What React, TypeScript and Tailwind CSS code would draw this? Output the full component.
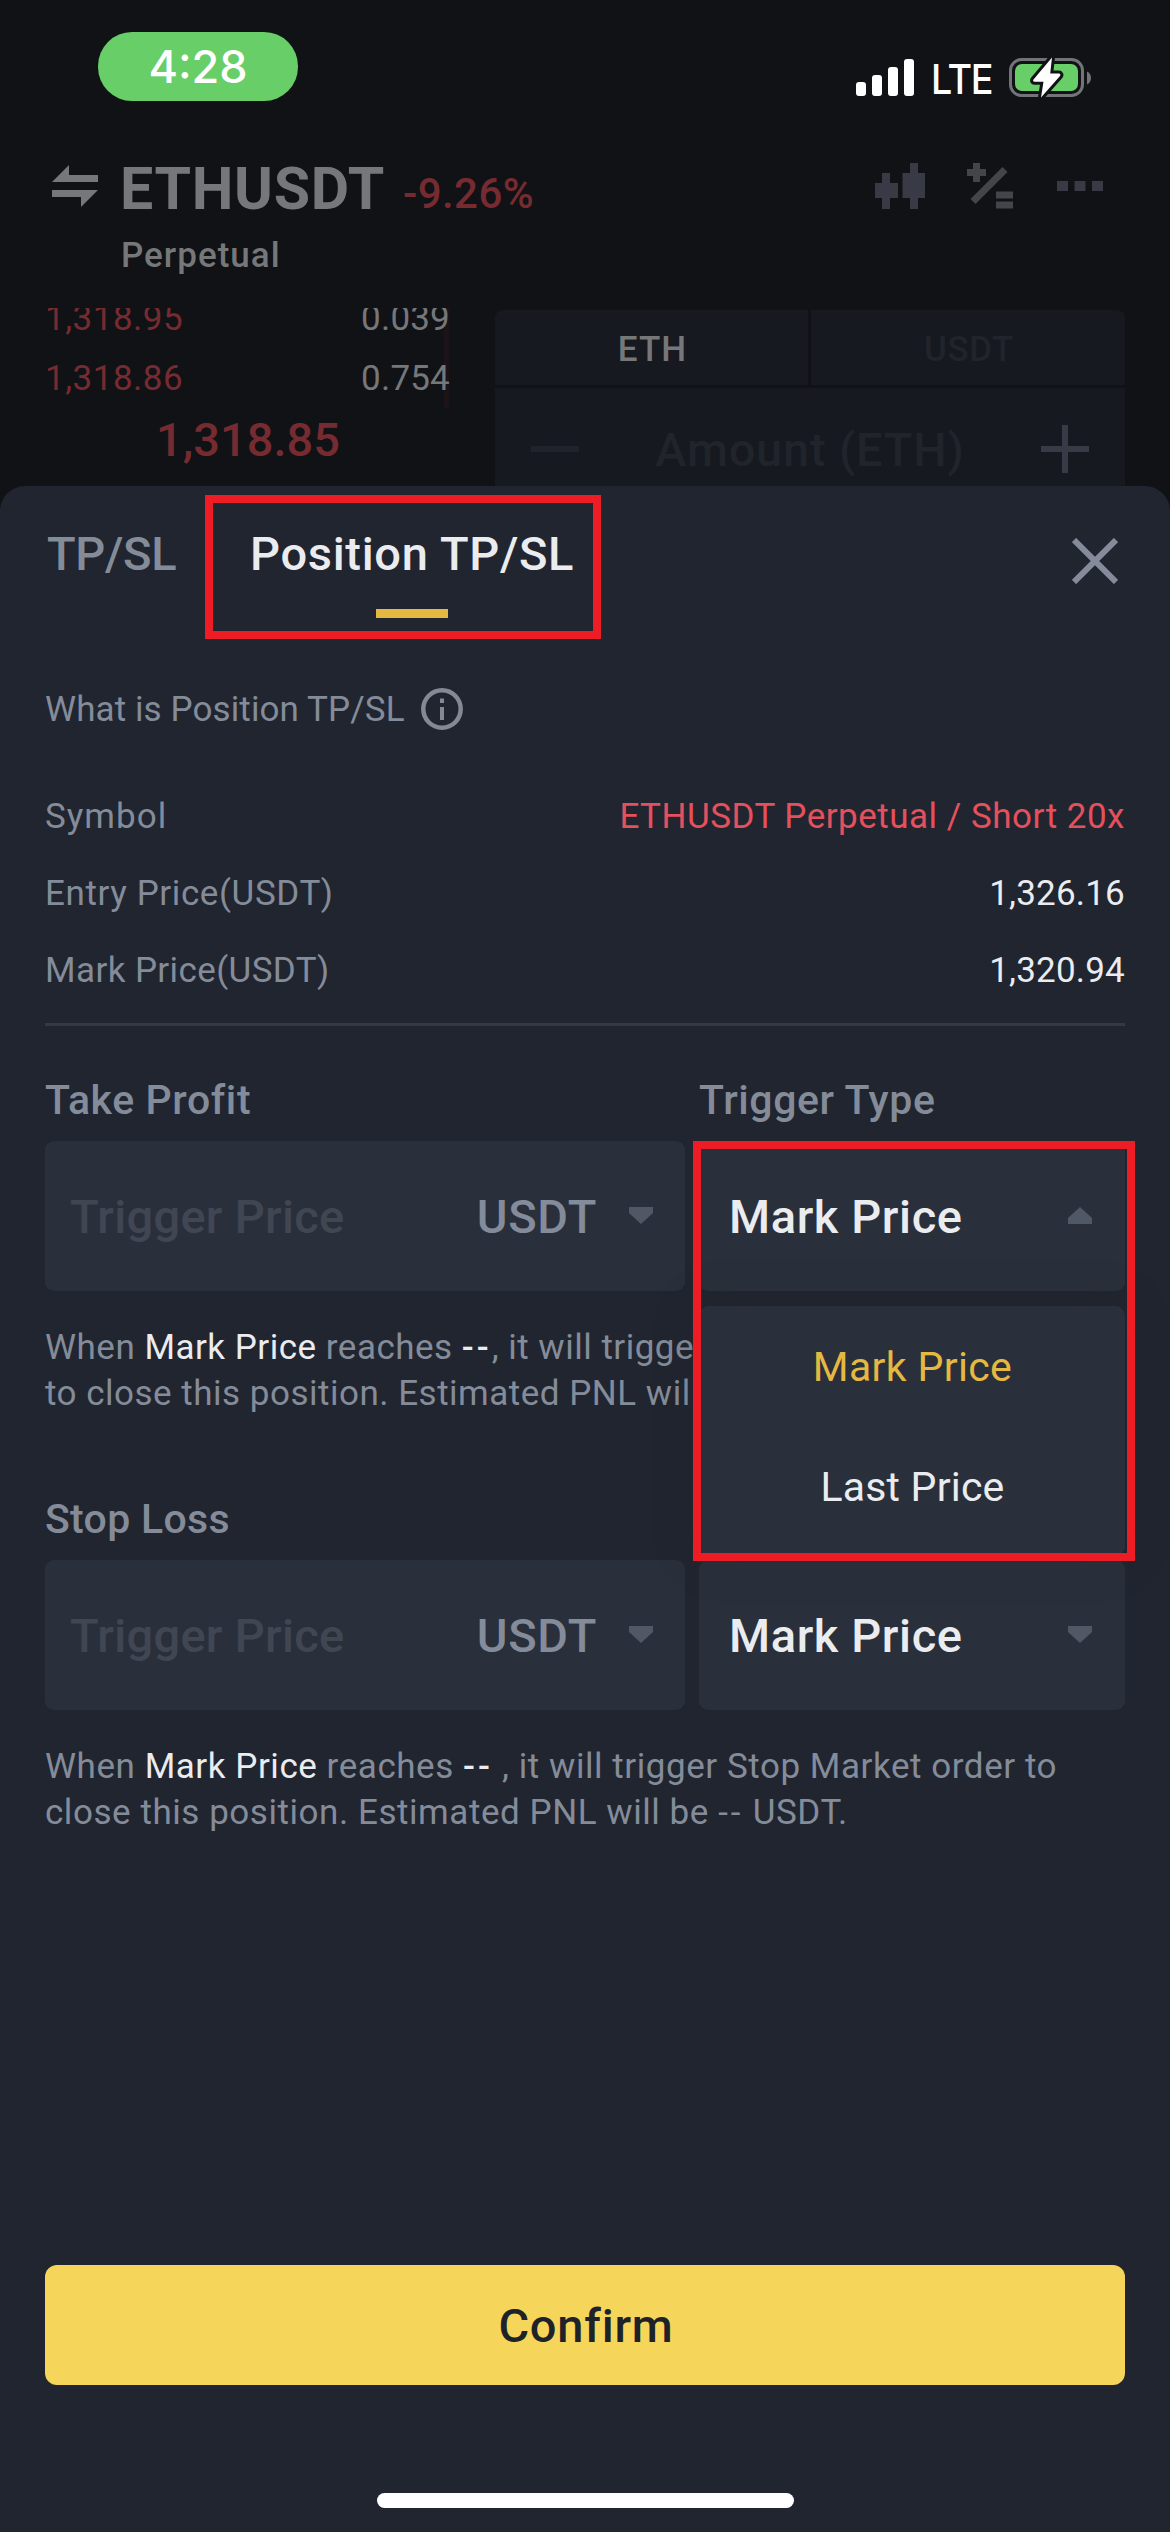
const asks = [
  { price: "1,318.95", amount: "0.039" },
  { price: "1,318.86", amount: "0.754" },
];

function Caret({ up = false }: { up?: boolean }) {
  return (
    <svg width="24" height="17" viewBox="0 0 24 17" fill="#505765" className="mb-[3px]">
      {up ? <path d="M0 17V11L12 0l12 11v6z" /> : <path d="M0 0h24v6L12 17 0 6z" />}
    </svg>
  );
}

function StatusBar() {
  return (
    <div className="flex h-[140px] items-start justify-between pl-[98px] pr-[79px]">
      <div className="mt-8 flex h-[69px] w-[200px] items-center justify-center rounded-[34px] bg-[#68ce67] font-['Inter'] text-[45px] font-medium text-white">
        4:28
      </div>
      <div className="mt-[57px] flex h-[41px] items-center">
        <svg width="58" height="37" viewBox="0 0 58 37" fill="#fff">
          <rect x="0" y="23" width="10" height="14" rx="3" />
          <rect x="16" y="16" width="10" height="21" rx="3" />
          <rect x="32" y="8" width="10" height="29" rx="3" />
          <rect x="48" y="0" width="10" height="37" rx="3" />
        </svg>
        <span className="ml-[17px] w-[78px] origin-left scale-x-[0.92] pt-[3px] font-['Inter'] text-[41px] font-medium leading-none tracking-[-1.5px] text-white">
          LTE
        </span>
        <svg width="82" height="41" viewBox="0 0 82 41">
          <rect x="1.5" y="2.5" width="72" height="36" rx="11" fill="none" stroke="#727477" strokeWidth="3" />
          <path d="M78 14.5c2.4 1 4 3.500 4 6.500s-1.600 5.500-4 6.500z" fill="#727477" />
          <rect x="6" y="7" width="63" height="27" rx="7" fill="#68ce67" />
          <path
            d="M43 .5 24.500 22.500c-.8 1.200-.2 2.300 1 2.300h9L32 40.500 51 19c.9-1.200.2-2.500-1.200-2.500h-8.600z"
            fill="#fff"
            stroke="#101216"
            strokeWidth="6"
            strokeLinejoin="round"
            paintOrder="stroke"
          />
        </svg>
      </div>
    </div>
  );
}

function PairHeader() {
  return (
    <>
      <div className="flex h-[96px] items-center justify-between pl-[52px] pr-[67px]">
        <div className="flex items-center">
          <svg width="46" height="43" viewBox="0 0 46 43" fill="#767779" className="mb-1">
            <path d="M0 17 17 0v10h29v7z" />
            <path d="M0 25h46L29 42V32H0z" />
          </svg>
          <span className="ml-[22px] pt-[1px] text-[59px] font-bold leading-none tracking-[0.7px] text-[#767779]">
            ETHUSDT
          </span>
          <span className="ml-[18px] pt-[12px] text-[42px] font-medium leading-none tracking-[0.4px] text-[#762b31]">
            -9.26%
          </span>
        </div>
        <div className="mb-1 flex items-center">
          <svg width="50" height="46" viewBox="0 0 50 46" fill="#383b45">
            <path d="M7 10h8v10h8v15h-8v11H7V35H0V20h7z" />
            <path d="M35 0h8v10h7v25h-7v11h-8V35h-7.500V10H35z" />
          </svg>
          <svg width="46" height="46" viewBox="0 0 46 46" fill="#43454b" className="ml-[42px]">
            <path d="M6 0h7v6h6v7h-6v6H6v-6H0V6h6z" />
            <path d="m35.500 4 5 5L8.500 41l-5-5z" />
            <path d="M29 28.500h17v7H29zM29 38.500h17v7H29z" />
          </svg>
          <svg width="46" height="10" viewBox="0 0 46 10" fill="#383b45" className="ml-[44px]">
            <path d="M0 0h11v10H0zM17.500 0h11v10h-11zM35 0h11v10H35z" />
          </svg>
        </div>
      </div>
      <div className="flex h-[48px] items-center pb-[7px] pl-[121px] text-[35px] font-medium tracking-[1px] text-[#767779]">
        Perpetual
      </div>
    </>
  );
}

function TradeArea() {
  return (
    <div className="mt-6 flex h-[178px] overflow-hidden pl-[45px]">
      <div className="w-[404px] shrink-0">
        <div className="-mt-[20px] border-r-[5px] border-[#1c1319]">
          {asks.map((a) => (
            <div key={a.price} className="-mr-[6px] flex h-[60px] items-center justify-between pt-[2px] text-[35px]">
              <span className="tracking-[0.5px] text-[#762b31]">{a.price}</span>
              <span className="tracking-[0.2px] text-[#767779]">{a.amount}</span>
            </div>
          ))}
        </div>
        <div className="flex h-[64px] items-center justify-center pl-[2px] pt-[1px] text-[47px] font-medium text-[#762b31]">
          1,318.85
        </div>
      </div>
      <div className="ml-[46px] mt-[2px] w-[630px] shrink-0 space-y-[3px]">
        <div className="flex h-[75px] gap-[3px] text-[35px] font-medium">
          <div className="flex w-[313px] items-center justify-center rounded-tl-lg bg-[#161920] pl-[2px] pt-[5px] tracking-[1px] text-[#767779]">
            ETH
          </div>
          <div className="flex flex-1 items-center justify-center rounded-tr-lg bg-[#161920] pl-[2px] pt-[5px] tracking-[0.7px] text-[#20242b]">
            USDT
          </div>
        </div>
        <div className="flex h-[122px] items-center justify-between bg-[#161920] px-[36px]">
          <div className="h-[6px] w-[48px] bg-[#20232b]" />
          <span className="pt-[2px] text-[47px] font-medium tracking-[0.8px] text-[#20242b]">Amount (ETH)</span>
          <svg width="48" height="48" viewBox="0 0 48 48" fill="#383b45">
            <path d="M21 0h6v21h21v6H27v21h-6V27H0v-6h21z" />
          </svg>
        </div>
      </div>
    </div>
  );
}

function SheetTabs() {
  return (
    <div className="flex h-[135px] items-center text-[47px] font-medium">
      <span className="w-[205px] pl-[2px] pt-[2px] tracking-[-0.3px] text-[#848c9a]">TP/SL</span>
      <div className="relative flex h-full items-center text-[#eaecef]">
        <span className="pt-[2px] tracking-[0.7px]">Position TP/SL</span>
        <div className="absolute left-[126px] top-[123px] h-[9px] w-[72px] bg-[#e5b941]" />
        {/* callout frame */}
        <div className="absolute -left-[45px] top-[9px] h-[144px] w-[396px] border-8 border-[#ee1c24]" />
      </div>
      <svg width="46" height="46" viewBox="0 0 46 46" stroke="#858b9a" strokeWidth="6" className="ml-auto mr-[7px] mt-[15px]">
        <path d="M2 2l42 42M44 2L2 44" />
      </svg>
    </div>
  );
}

function Details() {
  return (
    <>
      <div className="mt-[59px] flex h-[60px] items-center text-[35px] text-[#848c9a]">
        <span className="pt-[1px] tracking-[0.1px]">What is Position TP/SL</span>
        <svg width="42" height="42" viewBox="0 0 42 42" fill="#858996" className="mb-[3px] ml-[16px]">
          <circle cx="21" cy="21" r="18.700" fill="none" stroke="#858996" strokeWidth="4.500" />
          <path d="M19 10.500h4V15h-4zM19 19h4v13h-4z" />
        </svg>
      </div>
      <div className="mt-[38px] text-[35px] text-[#848c9a]">
        <div className="flex h-[77px] items-center justify-between pt-[2px]">
          <span className="tracking-[1px]">Symbol</span>
          <span className="tracking-[0.5px] text-[#e5505d]">ETHUSDT Perpetual / Short 20x</span>
        </div>
        <div className="flex h-[77px] items-center justify-between pt-[2px]">
          <span className="tracking-[0.6px]">Entry Price(USDT)</span>
          <span className="tracking-[0.2px] text-[#eaecef]">1,326.16</span>
        </div>
        <div className="flex h-[77px] items-center justify-between pt-[2px]">
          <span className="tracking-[0.4px]">Mark Price(USDT)</span>
          <span className="tracking-[0.2px] text-[#eaecef]">1,320.94</span>
        </div>
      </div>
      <div className="mt-[14px] h-[3px] bg-[#353945]" />
    </>
  );
}

function PriceInput() {
  return (
    <div className="flex h-[150px] w-[640px] items-center rounded-[9px] bg-[#2a303b] pl-[25px] pr-[32px] pt-[2px] text-[47px] font-medium">
      <span className="tracking-[0.3px] text-[#414653]">Trigger Price</span>
      <span className="ml-auto mr-[32px] tracking-[0.7px] text-[#848b9a]">USDT</span>
      <Caret />
    </div>
  );
}

function TriggerSelect({ open = false }: { open?: boolean }) {
  return (
    <div className="relative w-[426px]">
      <div className="flex h-[150px] items-center justify-between rounded-[9px] bg-[#2a303b] pl-[30px] pr-[33px] pt-[2px]">
        <span className="text-[47px] font-medium tracking-[0.6px] text-[#eaecef]">Mark Price</span>
        <Caret up={open} />
      </div>
      {open && (
        <>
          <div className="absolute left-0 top-[165px] z-10 h-[250px] w-full rounded-[10px] bg-[#2a303b] pt-[2px] text-[41px] shadow-[0_0_50px_rgba(35,35,38,0.2)]">
            <div className="flex h-[120px] items-center justify-center pl-[1px] tracking-[0.35px] text-[#e5b941]">Mark Price</div>
            <div className="flex h-[120px] items-center justify-center pl-[1px] tracking-[0.2px] text-[#eaecef]">Last Price</div>
          </div>
          {/* callout frame */}
          <div className="absolute -left-[6px] top-0 z-20 h-[420px] w-[442px] border-8 border-[#ee1c24]" />
        </>
      )}
    </div>
  );
}

export default function App() {
  return (
    <main className="flex h-[2532px] w-[1170px] flex-col overflow-hidden bg-[#101216] font-['Roboto',sans-serif]">
      <header className="h-[486px] shrink-0">
        <StatusBar />
        <PairHeader />
        <TradeArea />
      </header>

      <section className="flex flex-1 flex-col rounded-t-[25px] bg-[#21252f] px-[45px] pb-6">
        <SheetTabs />
        <Details />

        {/* Take profit */}
        <div className="mt-[44px] flex h-[60px] items-center pt-[2px] text-[41px] font-medium tracking-[0.6px] text-[#848c9a]">
          <span className="w-[654px]">Take Profit</span>
          <span>Trigger Type</span>
        </div>
        <div className="mt-[11px] flex gap-[14px]">
          <PriceInput />
          <TriggerSelect open />
        </div>
        <p className="mt-[34px] whitespace-nowrap text-[35px] leading-[46px] tracking-[0.5px] text-[#848c9a]">
          When <span className="text-[#eaecef]">Mark Price</span> reaches{" "}
          <span className="font-medium tracking-[3px] text-[#eaecef]">--</span>, it will trigger Stop Market order
          <br />
          to close this position. Estimated PNL will be -- USDT.
        </p>

        {/* Stop loss */}
        <div className="mt-[72px] flex h-[60px] items-center pt-[2px] text-[41px] font-medium tracking-[0.3px] text-[#848c9a]">
          Stop Loss
        </div>
        <div className="mt-[11px] flex gap-[14px]">
          <PriceInput />
          <TriggerSelect />
        </div>
        <p className="mt-[34px] whitespace-nowrap text-[35px] leading-[46px] tracking-[0.55px] text-[#848c9a]">
          When <span className="text-[#eaecef]">Mark Price</span> reaches{" "}
          <span className="font-medium tracking-[3px] text-[#eaecef]">--</span> , it will trigger Stop Market order to
          <br />
          close this position. Estimated PNL will be <span className="tracking-[3px]">--</span> USDT.
        </p>

        <button className="mt-auto h-[120px] rounded-[12px] bg-[#f5d65b] pl-[2px] pt-[2px] text-[47px] font-medium tracking-[0.8px] text-[#1e2329]">
          Confirm
        </button>
        <div className="mx-auto mt-[108px] h-[15px] w-[417px] rounded-full bg-white" />
      </section>
    </main>
  );
}
